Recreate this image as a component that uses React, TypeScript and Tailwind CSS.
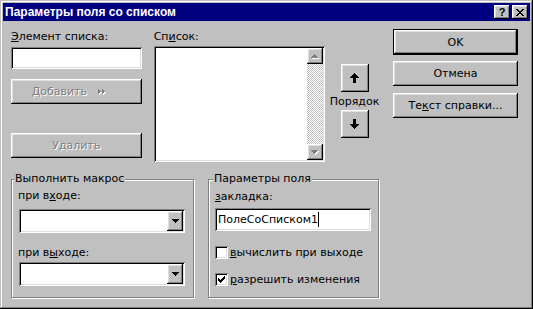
import React from "react";

const RAISED =
  "bg-[#c0c0c0] shadow-[inset_-1px_-1px_#000,inset_1px_1px_#fff,inset_-2px_-2px_#808080,inset_2px_2px_#dfdfdf]";
const SUNKEN =
  "bg-white shadow-[inset_1px_1px_#808080,inset_-1px_-1px_#fff,inset_2px_2px_#000,inset_-2px_-2px_#dfdfdf]";
const DIS = "text-[#808080] [text-shadow:1px_1px_0_#fff]";
const GROUP =
  "relative border border-[#808080] shadow-[inset_1px_1px_#fff,1px_1px_#fff]";

function DownTri({ color = "#000" }: { color?: string }) {
  return (
    <svg width="7" height="4" viewBox="0 0 7 4" shapeRendering="crispEdges">
      <path d="M0 0h7v1H0zM1 1h5v1H1zM2 2h3v1H2zM3 3h1v1H3z" fill={color} />
    </svg>
  );
}

function DisabledTri({ up }: { up: boolean }) {
  const d = up
    ? "M3 0h1v1H3zM2 1h3v1H2zM1 2h5v1H1zM0 3h7v1H0z"
    : "M0 0h7v1H0zM1 1h5v1H1zM2 2h3v1H2zM3 3h1v1H3z";
  return (
    <svg width="8" height="5" viewBox="0 0 8 5" shapeRendering="crispEdges">
      <path d={d} fill="#fff" transform="translate(1 1)" />
      <path d={d} fill="#808080" />
    </svg>
  );
}

function Combo() {
  return (
    <div className={`ml-[1px] w-[166px] h-[24px] p-[2px] flex justify-end ${SUNKEN}`}>
      <div className={`w-[16px] h-full flex items-center justify-center ${RAISED}`}>
        <DownTri />
      </div>
    </div>
  );
}

function Check({ checked }: { checked: boolean }) {
  return (
    <div className={`w-[13px] h-[13px] flex items-center justify-center ${SUNKEN}`}>
      {checked && (
        <svg width="7" height="7" viewBox="0 0 7 7" shapeRendering="crispEdges">
          <path
            d="M6 0h1v1H6zM5 1h2v1H5zM0 2h1v1H0zM4 2h3v1H4zM0 3h2v1H0zM3 3h3v1H3zM0 4h5v1H0zM1 5h3v1H1zM2 6h1v1H2z"
            fill="#000"
          />
        </svg>
      )}
    </div>
  );
}

export default function App() {
  return (
    <div className="w-[533px] h-[309px] bg-[#c0c0c0] p-[3px] flex flex-col shadow-[inset_-1px_-1px_#000,inset_1px_1px_#c0c0c0,inset_-2px_-2px_#808080,inset_2px_2px_#fff] font-['DejaVu_Sans',sans-serif] text-[11px] leading-[13px] text-black">
      {/* title bar */}
      <div className="h-[18px] bg-[#000080] flex items-center justify-between pl-[2px]">
        <span className="font-['Liberation_Sans',sans-serif] font-bold text-[12px] leading-[14px] text-white">
          Параметры поля со списком
        </span>
        <div className="flex gap-[2px] pr-[2px]">
          <div className={`w-[16px] h-[14px] flex items-center justify-center ${RAISED}`}>
            <span className="font-['Liberation_Sans',sans-serif] font-bold text-[11px] leading-[11px]">?</span>
          </div>
          <div className={`w-[16px] h-[14px] flex items-center justify-center ${RAISED}`}>
            <svg width="8" height="7" viewBox="0 0 8 7" shapeRendering="crispEdges">
              <path
                d="M0 0h2v1H0zM6 0h2v1H6zM1 1h2v1H1zM5 1h2v1H5zM2 2h4v1H2zM3 3h2v1H3zM2 4h4v1H2zM1 5h2v1H1zM5 5h2v1H5zM0 6h2v1H0zM6 6h2v1H6z"
                fill="#000"
              />
            </svg>
          </div>
        </div>
      </div>

      {/* body */}
      <div className="flex pt-[9px] pl-[8px]">
        <div className="w-[369px] flex flex-col">
          <div className="flex">
            {/* column 1 */}
            <div className="w-[131px] flex flex-col">
              <div>
                <u>Э</u>лемент списка:
              </div>
              <div className={`mt-[4px] h-[22px] ${SUNKEN}`} />
              <div className={`mt-[10px] h-[25px] flex items-center justify-center pr-[14px] ${RAISED}`}>
                <span className={DIS}>Добавить</span>
                <svg className="ml-[11px]" width="9" height="6" viewBox="0 0 9 6" shapeRendering="crispEdges">
                  <path d="M1 1h1v5H1zM2 2h1v3H2zM3 3h1v1H3zM5 1h1v5H5zM6 2h1v3H6zM7 3h1v1H7z" fill="#fff" />
                  <path d="M0 0h1v5H0zM1 1h1v3H1zM2 2h1v1H2zM4 0h1v5H4zM5 1h1v3H5zM6 2h1v1H6z" fill="#808080" />
                </svg>
              </div>
              <div className={`mt-[29px] h-[25px] flex items-center justify-center ${RAISED}`}>
                <span className={DIS}>Удалить</span>
              </div>
            </div>

            {/* column 2 */}
            <div className="ml-[12px] w-[172px] flex flex-col">
              <div>
                Сп<u>и</u>сок:
              </div>
              <div className={`mt-[3px] h-[116px] p-[2px] flex justify-end ${SUNKEN}`}>
                <div className="w-[16px] flex flex-col">
                  <div className={`h-[16px] flex items-center justify-center ${RAISED}`}>
                    <DisabledTri up />
                  </div>
                  <div className="flex-1 bg-[image:repeating-conic-gradient(#c0c0c0_0%_25%,#fff_0%_50%)] bg-[length:2px_2px]" />
                  <div className={`h-[16px] flex items-center justify-center ${RAISED}`}>
                    <DisabledTri up={false} />
                  </div>
                </div>
              </div>
            </div>

            {/* column 3 */}
            <div className="ml-[4px] w-[51px] flex flex-col items-center">
              <div className={`mt-[34px] w-[28px] h-[28px] flex items-center justify-center ${RAISED}`}>
                <svg width="9" height="10" viewBox="0 0 9 10" shapeRendering="crispEdges">
                  <path d="M4 0h1v1H4zM3 1h3v1H3zM2 2h5v1H2zM1 3h7v1H1zM0 4h9v1H0zM3 5h3v5H3z" fill="#000" />
                </svg>
              </div>
              <div className="mt-[3px]">Порядок</div>
              <div className={`mt-[2px] w-[28px] h-[28px] flex items-center justify-center ${RAISED}`}>
                <svg width="9" height="10" viewBox="0 0 9 10" shapeRendering="crispEdges">
                  <path d="M3 0h3v5H3zM0 5h9v1H0zM1 6h7v1H1zM2 7h5v1H2zM3 8h3v1H3zM4 9h1v1H4z" fill="#000" />
                </svg>
              </div>
            </div>
          </div>

          {/* groups */}
          <div className="flex mt-[17px]">
            <div className={`w-[183px] h-[119px] ${GROUP}`}>
              <div className="absolute left-[2px] top-[-8px] px-[1px] bg-[#c0c0c0]">Выполнить макрос</div>
              <div className="flex flex-col pl-[6px] pt-[9px]">
                <div>
                  при в<u>х</u>оде:
                </div>
                <div className="mt-[7px]">
                  <Combo />
                </div>
                <div className="mt-[13px]">
                  при в<u>ы</u>ходе:
                </div>
                <div className="mt-[3px]">
                  <Combo />
                </div>
              </div>
            </div>

            <div className={`ml-[14px] w-[171px] h-[119px] ${GROUP}`}>
              <div className="absolute left-[4px] top-[-8px] px-[1px] bg-[#c0c0c0]">Параметры поля</div>
              <div className="flex flex-col pl-[6px] pt-[10px]">
                <div>
                  <u>з</u>акладка:
                </div>
                <div className={`mt-[5px] w-[156px] h-[23px] pl-[3px] flex items-center ${SUNKEN}`}>
                  <span>ПолеСоСписком1</span>
                  <span className="w-px h-[15px] bg-black" />
                </div>
                <div className="mt-[15px] flex items-center">
                  <Check checked={false} />
                  <span className="ml-[2px]">
                    <u>в</u>ычислить при выходе
                  </span>
                </div>
                <div className="mt-[14px] flex items-center">
                  <Check checked />
                  <span className="ml-[2px]">
                    <u>р</u>азрешить изменения
                  </span>
                </div>
              </div>
            </div>
          </div>
        </div>

        {/* right column */}
        <div className="ml-[13px] w-[125px] flex flex-col mt-[-1px]">
          <div className={`h-[26px] border border-black flex items-center justify-center ${RAISED}`}>OK</div>
          <div className={`mt-[6px] h-[25px] flex items-center justify-center ${RAISED}`}>Отмена</div>
          <div className={`mt-[7px] h-[25px] flex items-center justify-center ${RAISED}`}>
            <span>
              Те<u>к</u>ст справки...
            </span>
          </div>
        </div>
      </div>
    </div>
  );
}
